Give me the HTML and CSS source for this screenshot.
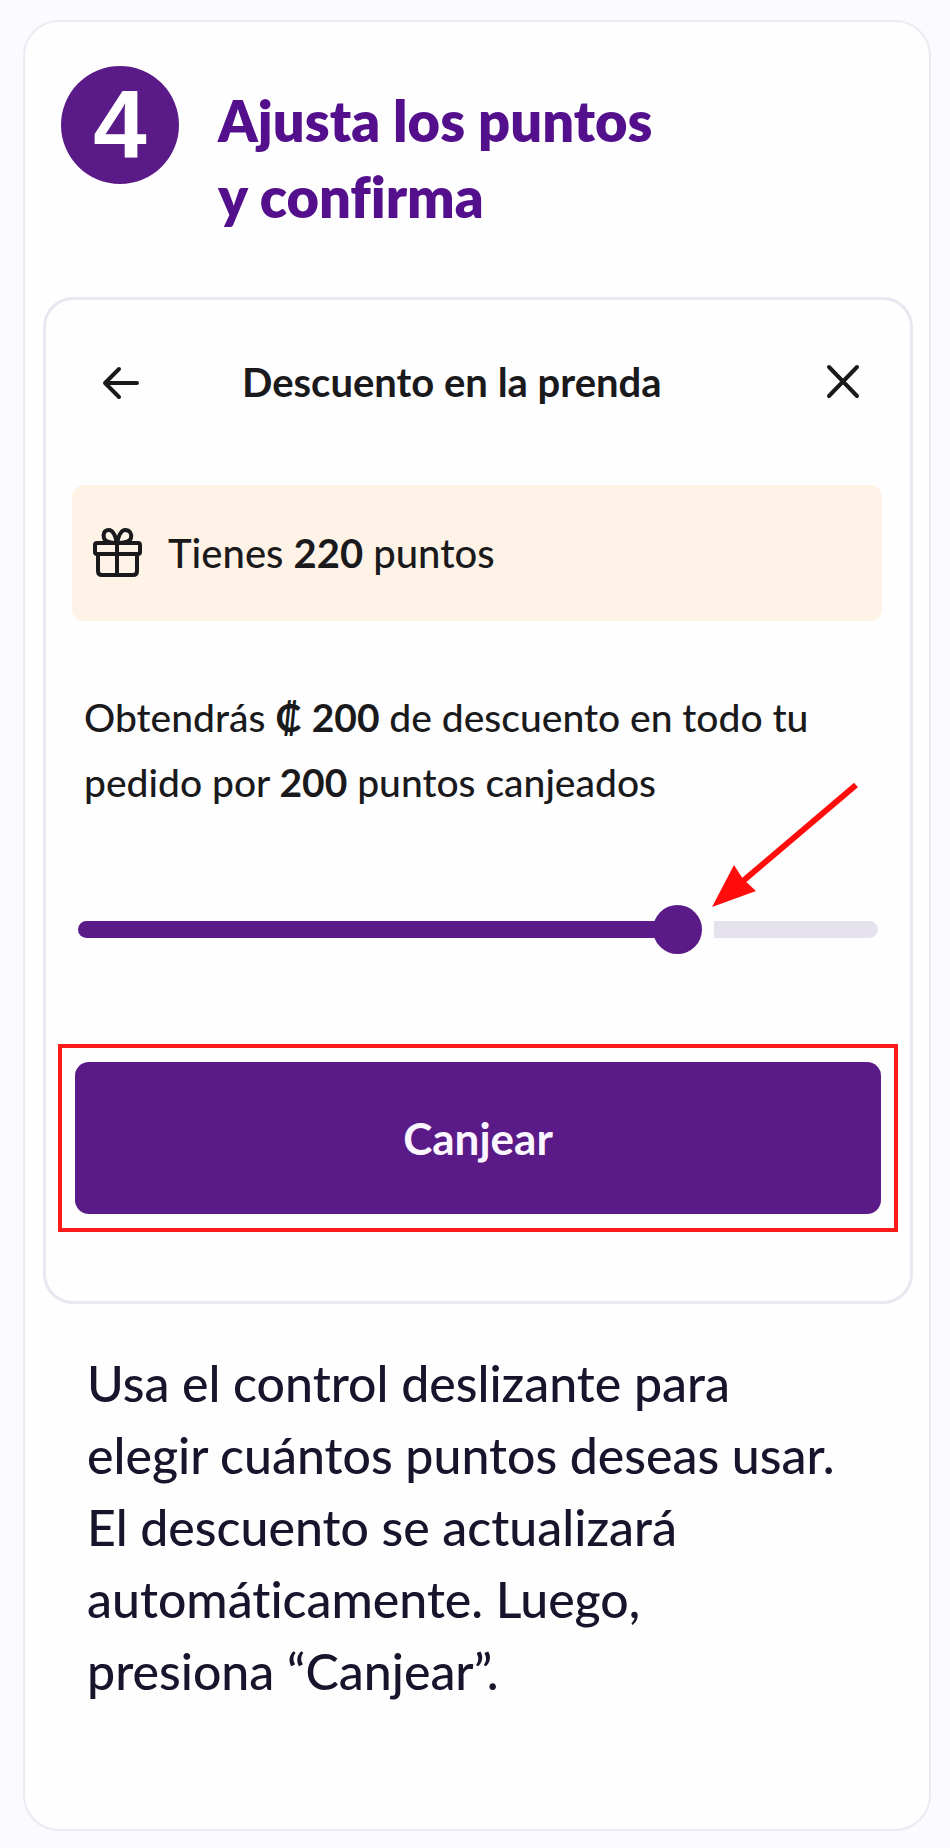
FILE: index.html
```html
<!DOCTYPE html>
<html lang="es">
<head>
<meta charset="utf-8">
<meta name="viewport" content="width=device-width, initial-scale=1">
<title>Ajusta los puntos y confirma</title>
<link rel="stylesheet" href="styles.css">
</head>
<body>
<main class="step">
  <header class="step-header">
    <span class="step-number">4</span>
    <h1 class="step-title">Ajusta los puntos<br>y confirma</h1>
  </header>

  <section class="panel" aria-labelledby="panel-title">
    <div class="panel-bar">
      <button class="icon-button" type="button" aria-label="Volver">
        <svg viewBox="0 0 44 44" width="44" height="44" fill="none" stroke="currentColor" stroke-width="4" stroke-linecap="round" stroke-linejoin="round"><path d="M39 23H7M21 9L7 23l14 14"/></svg>
      </button>
      <h2 class="panel-title" id="panel-title">Descuento en la prenda</h2>
      <button class="icon-button" type="button" aria-label="Cerrar">
        <svg viewBox="0 0 44 44" width="44" height="44" fill="none" stroke="currentColor" stroke-width="4" stroke-linecap="round"><path d="M9 7l28 29M37 7L9 36"/></svg>
      </button>
    </div>

    <div class="balance">
      <svg class="gift" viewBox="0 0 50 50" width="50" height="50" fill="none" stroke="currentColor" stroke-width="4" stroke-linejoin="round">
        <rect x="3" y="15" width="45" height="11" rx="2"/>
        <path d="M6 26v17q0 4 4 4h31q4 0 4-4V26M25 15v32"/>
        <path d="M25 15C23 6 20 2 17 2c-5 0-6 4-5 8 1 4 5 5 13 5zM25 15c2-9 5-13 8-13 5 0 7 4 6 8-1 4-6 5-14 5z"/>
      </svg>
      <p class="balance-text">Tienes <strong>220</strong> puntos</p>
    </div>

    <p class="summary" id="summary">Obtendrás <strong>₡ 200</strong> de descuento en todo tu pedido por <strong>200</strong> puntos canjeados</p>

    <div class="slider">
      <input class="slider-input" type="range" min="0" max="261" value="200" aria-label="Puntos a canjear" aria-describedby="summary">
      <svg class="pointer" viewBox="0 0 160 132" width="160" height="132" aria-hidden="true">
        <path d="M151 5L38 101" stroke="#ff0d0d" stroke-width="6"/>
        <path d="M7 127L29 85L38 99L51 111Z" fill="#ff0d0d"/>
      </svg>
    </div>

    <div class="highlight">
      <button class="redeem" type="button">Canjear</button>
    </div>
  </section>

  <p class="help">Usa el control deslizante para<br>elegir cuántos puntos deseas usar.<br>El descuento se actualizará<br>automáticamente. Luego,<br>presiona “Canjear”.</p>
</main>
</body>
</html>
```

FILE: styles.css
```css
:root {
  --purple: #5a1a88;
  --purple-text: #530f8c;
  --ink: #1a1a1c;
  --line: #e9e7ef;
}

* {
  box-sizing: border-box;
}

body {
  margin: 0;
  padding: 20px 19px 16px 23px;
  background: #fbfafd;
  color: var(--ink);
  font-family: Lato, "Open Sans", sans-serif;
  font-weight: 500;
  font-variant-ligatures: none;
}

h1,
h2,
p {
  margin: 0;
}

.step {
  padding: 44px 16px 122px 18px;
  border: 2px solid #eee9f3;
  border-radius: 36px;
  background: #fefefe;
}

.step-header {
  display: flex;
  gap: 39px;
  padding: 0 18px 62px;
}

.step-number {
  flex: none;
  width: 118px;
  height: 118px;
  border-radius: 50%;
  background: var(--purple);
  color: #fff;
  font: 700 96px/118px "Liberation Sans", Arial, sans-serif;
  text-align: center;
}

.step-title {
  padding-top: 17px;
  color: var(--purple-text);
  font-size: 56px;
  line-height: 76px;
  font-weight: 800;
}

.panel {
  padding: 52px 12px 69px;
  border: 3px solid var(--line);
  border-radius: 30px;
}

.panel-bar {
  display: flex;
  align-items: center;
  padding: 0 34px 0 40px;
  margin-bottom: 73px;
}

.icon-button {
  width: 44px;
  height: 44px;
  padding: 0;
  border: 0;
  background: none;
  color: inherit;
}

.icon-button svg {
  display: block;
}

.panel-title {
  flex: 1;
  padding-left: 100px;
  font-size: 40px;
  line-height: 60px;
  font-weight: 700;
}

.balance {
  display: flex;
  align-items: center;
  gap: 26px;
  min-height: 136px;
  margin: 0 16px 64px 14px;
  padding: 0 20px;
  border-radius: 12px;
  background: #fef3e6;
}

.gift {
  flex: none;
}

.balance-text,
.summary {
  font-size: 40px;
  line-height: 65px;
}

.summary {
  margin: 0 40px 90px 26px;
  font-size: 39px;
}

.slider {
  position: relative;
  margin: 0 20px 90px;
}

.slider-input {
  display: block;
  width: 100%;
  height: 49px;
  margin: 0;
  appearance: none;
  background: none;
}

.slider-input::-webkit-slider-runnable-track {
  height: 17px;
  border-radius: 9px;
  background: linear-gradient(to right, var(--purple) 76%, #fefefe 76% calc(79% + 4px), #e6e2ed calc(79% + 4px));
}

.slider-input::-webkit-slider-thumb {
  width: 49px;
  height: 49px;
  margin-top: -16px;
  appearance: none;
  border-radius: 50%;
  background: var(--purple);
}

.pointer {
  position: absolute;
  right: 13px;
  bottom: 42px;
}

.highlight {
  padding: 14px 13px;
  border: 4px solid #fb1a1a;
}

.redeem {
  display: block;
  width: 100%;
  height: 152px;
  border: 0;
  border-radius: 14px;
  background: var(--purple);
  color: #fbf5ff;
  font: inherit;
  font-size: 44px;
  font-weight: 700;
}

.help {
  padding: 43px 0 0 44px;
  color: #17142b;
  font-size: 50px;
  line-height: 72px;
}
```
